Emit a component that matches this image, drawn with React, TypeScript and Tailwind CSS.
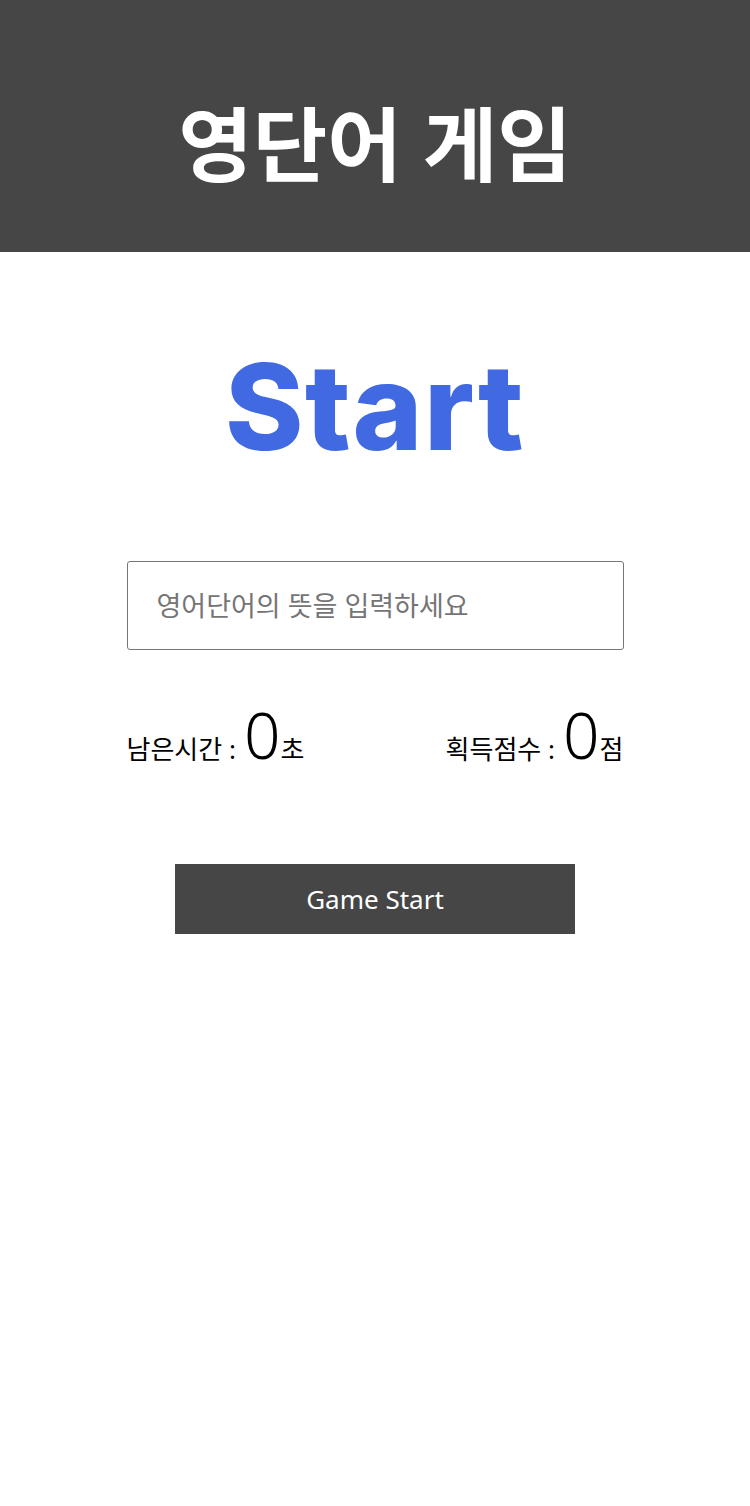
import React from 'react'

const KR = { fontFamily: '"Noto Sans", "Noto Sans CJK KR", sans-serif' }

export default function App() {
    return (
        <div className="w-[750px] min-h-[1506px] bg-white" style={KR}>
            {/* ::Header */}
            <header className="h-[252px] bg-[#464646] flex items-center justify-center pt-[34px]">
                <h1 className="text-white text-[81px] font-semibold leading-none tracking-[0px]">영단어 게임</h1>
            </header>

            {/* ::Main */}
            <main className="flex flex-col items-center">
                {/* :::Start title */}
                <h2
                    className="mt-[80px] text-[#4169e1] text-[119px] font-extrabold leading-[150px] tracking-[1.5px]"
                    style={{ fontFamily: 'Inter, sans-serif' }}
                >
                    Start
                </h2>

                {/* :::Answer input */}
                <input
                    type="text"
                    placeholder="영어단어의 뜻을 입력하세요"
                    className="mt-[79px] w-[497px] h-[89px] border border-[#767676] rounded-[3px] px-[29px] text-[27px] text-black placeholder:text-[#757575] outline-none"
                />

                {/* :::Time & score */}
                <div className="mt-[53px] w-[497px] flex justify-between items-baseline text-black">
                    <p className="flex items-baseline">
                        <span className="text-[26px]">남은시간 :</span>
                        <span className="ml-[8px] text-[64px] font-light leading-none">0</span>
                        <span className="text-[26px]">초</span>
                    </p>
                    <p className="flex items-baseline">
                        <span className="text-[26px]">획득점수 :</span>
                        <span className="ml-[8px] text-[64px] font-light leading-none">0</span>
                        <span className="text-[26px]">점</span>
                    </p>
                </div>

                {/* :::Start button */}
                <button className="mt-[95px] w-[400px] h-[70px] bg-[#464646] text-white text-[26px]">
                    Game Start
                </button>
            </main>
        </div>
    )
}
